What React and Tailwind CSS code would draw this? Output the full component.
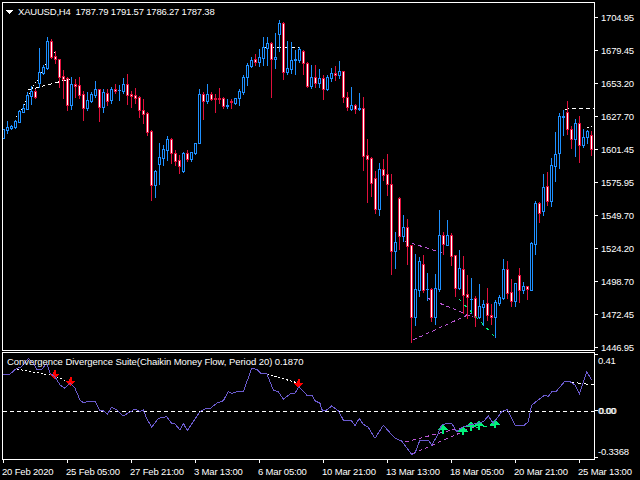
import React from "react";

const D = `129,129,138,138,b 121,127,130,133,b 125,126,128,129,b 120,121,127,128,b 110,111,122,122,b 104,108,112,112,b 92,95,109,109,b 86,91,96,104,b 89,91,97,98,r 48,72,83,87,b 65,67,73,74,b 37,41,68,69,b 39,41,57,58,r 51,56,59,63,r 59,59,77,87,r 70,76,79,98,r 77,78,105,110,r 77,84,105,109,b 79,84,86,97,r 77,85,95,98,r 91,94,108,120,r 92,100,108,110,b 92,94,101,102,b 81,89,95,97,b 89,89,107,121,r 89,92,107,112,b 89,93,101,105,r 87,89,100,103,b 84,89,91,93,r 85,90,90,100,b 78,84,91,93,b 74,84,95,104,r 91,94,96,107,r 88,95,98,103,r 96,97,110,117,r 99,110,114,123,r 112,113,132,135,r 130,131,185,200,r 170,171,185,197,b 143,157,164,184,b 145,149,158,165,b 136,139,150,160,b 138,139,153,163,r 150,153,161,165,r 155,160,166,173,r 152,153,171,172,b 150,153,159,161,r 152,152,159,161,b 143,143,153,154,b 89,94,143,143,b 92,94,101,119,r 84,94,101,103,b 92,94,99,100,r 94,98,99,112,r 88,98,99,103,r 97,98,106,108,r 99,105,106,108,b 99,101,102,108,r 98,98,103,104,b 89,91,98,105,b 75,77,92,94,b 63,65,77,85,b 57,60,66,67,b 54,59,62,65,r 49,57,62,66,b 37,47,58,65,b 37,43,48,65,b 42,43,59,97,r 33,57,59,68,b 20,23,34,51,b 22,23,72,79,r 41,68,72,74,b 42,60,69,73,b 50,59,60,74,b 47,49,60,62,b 50,51,63,74,r 62,63,86,87,r 65,77,86,88,b 65,77,83,87,r 69,78,83,87,b 75,78,89,99,r 75,77,89,90,b 68,73,78,81,b 66,73,75,80,r 61,71,75,78,b 71,71,97,102,r 92,97,107,110,r 87,105,109,110,b 104,105,109,113,r 93,108,109,110,b 97,108,156,170,r 139,155,159,202,r 157,158,183,196,r 171,178,209,213,r 163,169,209,215,b 159,169,175,180,r 154,174,184,195,r 174,184,251,274,r 232,242,251,268,b 197,198,236,249,r 215,227,236,241,b 219,227,246,264,r 245,245,317,342,r 254,289,317,325,b 257,261,290,296,b 255,264,290,292,r 273,289,289,300,b 288,289,317,321,r 274,288,317,324,b 210,235,289,291,b 232,235,244,254,r 220,235,245,245,b 233,235,256,265,r 255,255,288,296,r 250,268,288,289,b 256,269,295,313,r 275,294,297,318,r 278,299,299,313,b 296,298,317,326,r 284,306,317,318,b 300,304,307,325,b 288,303,315,320,r 304,315,317,324,r 300,302,317,337,b 295,297,303,305,b 259,269,298,299,b 261,269,293,298,r 279,292,301,306,r 283,283,301,306,b 268,275,290,302,r 282,286,290,293,b 286,286,289,299,r 242,243,290,290,b 201,203,244,254,b 202,203,213,222,r 174,187,211,215,b 172,186,201,205,r 158,165,201,206,b 132,154,166,181,b 113,116,153,168,b 110,116,117,135,b 101,112,129,134,r 126,129,139,148,r 119,123,139,156,b 116,123,145,162,r 129,137,145,147,b 130,131,137,143,b 131,135,149,155,r`
  .split(" ")
  .map((s, i) => {
    const [hi, top, bot, lo, c] = s.split(",");
    return { x: 3 + 4 * i, hi: +hi, top: +top, bot: +bot, lo: +lo, c };
  });

const LINE = [[10,102],[30,102],[50,85],[65,80],[85,55],[100,70],[110,88],[125,88],[140,70],[150,100],[165,110],[180,135],[195,145],[210,130],[225,145],[240,180],[250,188],[265,184],[285,184],[300,212],[310,212],[322,222],[335,202],[350,210],[370,228],[390,216],[405,207],[420,215],[430,210],[440,235],[455,262],[475,235],[500,230],[515,250],[525,252],[540,270],[550,250],[562,272],[580,245],[600,215],[620,204],[632,204],[650,190],[670,182],[685,155],[695,160],[710,155],[730,155],[755,85],[770,88],[785,102],[800,100],[820,150],[835,155],[850,178],[870,162],[885,160],[897,140],[920,165],[935,165],[945,182],[960,190],[960,195],[968,213],[980,210],[995,198],[1015,212],[1030,240],[1055,243],[1065,257],[1078,235],[1090,253],[1105,262],[1125,295],[1150,256],[1185,295],[1205,303],[1235,343],[1245,340],[1260,300],[1285,300],[1295,315],[1310,290],[1325,255],[1340,250],[1355,250],[1370,275],[1390,260],[1410,255],[1430,250],[1450,245],[1465,228],[1480,250],[1505,215],[1522,208],[1545,255],[1570,258],[1585,245],[1595,195],[1635,165],[1645,170],[1655,155],[1668,155],[1695,123],[1710,125],[1725,135],[1738,162],[1760,95],[1775,120]]
  .map(([x, y]) => `${(x / 3).toFixed(1)},${(340 + y / 3).toFixed(1)}`)
  .join(" ");

const PRICES = ["1704.95","1679.45","1653.20","1627.70","1601.45","1575.95","1549.70","1524.20","1498.70","1472.45","1446.95"];
const TIMES = ["20 Feb 2020","25 Feb 05:00","27 Feb 21:00","3 Mar 13:00","6 Mar 05:00","10 Mar 21:00","13 Mar 13:00","18 Mar 05:00","20 Mar 21:00","25 Mar 13:00"];

const Dash = ({ d, color = "#fff", dash = "4 3" }) => (
  <path d={d} fill="none" stroke={color} strokeWidth="1" strokeDasharray={dash} />
);

const Candle = ({ x, hi, top, bot, lo, c }) => {
  const col = c === "b" ? "#1e90ff" : "#e0103c";
  const fill = c === "b" ? "#000" : "#fff";
  const h = bot - top + 1;
  return (
    <g>
      <rect x={x} y={hi} width="1" height={lo - hi + 1} fill={col} />
      <rect x={x - 1} y={top} width="3" height={h} fill={col} />
      {h > 2 && <rect x={x} y={top + 1} width="1" height={h - 2} fill={fill} />}
    </g>
  );
};

const Down = ({ x, y }) => (
  <path d={`M${x} ${y}h2v4h3v1h-1v1h-1v1h-1v1h-1v1h-1v-1h-1v-1h-1v-1h-1v-1h-1v-1h3z`} transform="translate(-1 0)" fill="#ff0000" />
);
const Up = ({ x, y, b }) => (
  <path d={`M${x} ${y}h1v1h1v1h1v1h1v1h1v1h1v1h-4v${b - y - 6}h-2v-${b - y - 6}h-4v-1h1v-1h1v-1h1v-1h1v-1h1z`} fill="#00f07a" />
);

const txt = "font-['Liberation_Sans',sans-serif] text-[9.5px] leading-[13px] whitespace-nowrap text-white";

export default function App() {
  return (
    <div className={`flex h-[480px] w-[640px] flex-col overflow-hidden bg-black pl-[2px] pt-[2px] ${txt}`}>
      <div className="flex h-[349px] shrink-0">
        <div className="relative w-[593px] shrink-0 border border-white">
          <svg className="block" width="591" height="347" viewBox="3 3 591 347" shapeRendering="crispEdges">
            <Dash d="M28 90L70 79" />
            <Dash d="M16 117L23 107L33 87L41 74L50 57L55 52" dash="1 2" />
            <Dash d="M263 48L300 47" />
            <Dash d="M565 110L568 109L594 108" />
            <Dash d="M587 128L594 125" dash="2 2" />
            <Dash d="M405 241L442 253" color="#ba55d3" />
            <Dash d="M427 298L473 317" color="#ba55d3" />
            <Dash d="M413 340L472 313" color="#ba55d3" />
            {D.map((c) => (
              <Candle key={c.x} {...c} />
            ))}
            <Dash d="M459 299L495 337" color="#00f07a" dash="3 5" />
          </svg>
          <div className="absolute left-[3px] top-[2px] flex items-center gap-[5px]">
            <svg width="7" height="4" viewBox="0 0 7 4" shapeRendering="crispEdges">
              <path d="M0 0h7v1h-1v1h-1v1h-1v1h-1v-1h-1v-1h-1v-1h-1z" fill="#fff" />
            </svg>
            <span className="tracking-[-0.2px]">XAUUSD,H4&nbsp;&nbsp;1787.79 1791.57 1786.27 1787.38</span>
          </div>
        </div>
        <div className="flex shrink-0 flex-col gap-[20px] pt-[9px]">
          {PRICES.map((p) => (
            <div key={p} className="flex h-[13px] shrink-0 items-center">
              <div className="h-px w-[3px] bg-white" />
              <span className="ml-[3px] tracking-[-0.2px]">{p}</span>
            </div>
          ))}
        </div>
      </div>

      <div className="mt-px flex h-[108px] shrink-0">
        <div className="relative w-[593px] shrink-0 border border-white">
          <svg className="block" width="591" height="106" viewBox="3 353 591 106" shapeRendering="crispEdges">
            <Dash d="M3 411H594" />
            <Dash d="M17 369L55 376L71 383" dash="2 2" />
            <Dash d="M263 373L298 383" dash="2 2" />
            <Dash d="M570 382L594 385" />
            <Dash d="M405 442L460 428" color="#ba55d3" />
            <Dash d="M412 454L478 425" color="#ba55d3" />
            <Dash d="M476 428L495 425" color="#00f07a" />
            <Down x={55} y={370} />
            <Down x={71} y={377} />
            <Down x={299} y={379} />
            <Up x={442} y={424} b={434} />
            <Up x={462} y={426} b={435} />
            <Up x={470} y={421} b={431} />
            <Up x={478} y={420} b={430} />
            <Up x={494} y={419} b={428} />
            <polyline points={LINE} fill="none" stroke="#6a5acd" strokeWidth="1" />
          </svg>
          <span className="absolute left-[4px] top-[2px] tracking-[-0.06px]">Convergence Divergence Suite(Chaikin Money Flow, Period 20) 0.1870</span>
        </div>
        <div className="flex shrink-0 flex-col pt-[2px]">
          <div className="flex h-[13px] items-start">
            <div className="h-px w-[3px] bg-white" />
            <span className="tracking-[-0.2px]">0.41</span>
          </div>
          <div className="mt-[37px] flex h-[13px] items-center">
            <div className="h-px w-[3px] bg-white" />
            <span className="tracking-[-0.2px] [text-shadow:1px_0_0_#fff]">0.00</span>
          </div>
          <div className="mt-[28px] flex h-[13px] items-end">
            <div className="h-px w-[3px] bg-white" />
            <span className="tracking-[-0.2px]">-0.3368</span>
          </div>
        </div>
      </div>

      <div className="flex pl-px">
        {TIMES.map((t) => (
          <div key={t} className="flex w-[64px] shrink-0 flex-col items-start">
            <div className="h-[3px] w-px bg-white" />
            <span className="-ml-px mt-[2px] tracking-[-0.18px]">{t}</span>
          </div>
        ))}
      </div>
    </div>
  );
}
